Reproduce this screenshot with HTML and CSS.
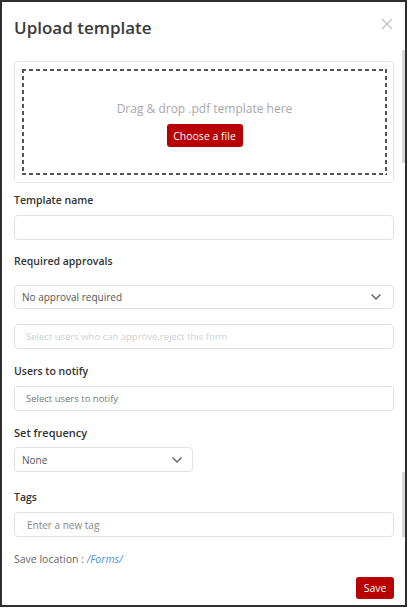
FILE: index.html
```html
<!DOCTYPE html>
<html lang="en">
<head>
  <meta charset="UTF-8" />
  <title>Upload template</title>
  <link rel="stylesheet" href="styles.css">
</head>
<body>
  <div class="upload-modal">
    <div class="modal-header">
      <h1 class="modal-title">Upload template</h1>
      <svg class="modal-close" width="12" height="12" viewBox="0 0 12 12">
        <path d="M1 1 L11 11 M11 1 L1 11" stroke="#c4c4c4" stroke-width="1.4" fill="none"/>
      </svg>
    </div>

    <div class="dropzone">
      <div class="dropzone-inner">
        <div class="dropzone-text">Drag &amp; drop .pdf template here</div>
        <button class="red-button choose-button">Choose a file</button>
      </div>
    </div>

    <label class="field-label label-first">Template name</label>
    <div class="field-input"></div>

    <label class="field-label">Required approvals</label>
    <div class="field-input field-select">
      <span class="field-value">No approval required</span>
      <svg class="chevron" width="12" height="8" viewBox="0 0 12 8">
        <path d="M1.5 1.5 L6 6 L10.5 1.5" stroke="#666" stroke-width="1.5" fill="none"/>
      </svg>
    </div>
    <div class="field-input field-gap">
      <span class="field-placeholder faint">Select users who can approve,reject this form</span>
    </div>

    <label class="field-label label-users">Users to notify</label>
    <div class="field-input">
      <span class="field-placeholder">Select users to notify</span>
    </div>

    <label class="field-label label-large">Set frequency</label>
    <div class="field-input field-select field-small">
      <span class="field-value">None</span>
      <svg class="chevron" width="12" height="8" viewBox="0 0 12 8">
        <path d="M1.5 1.5 L6 6 L10.5 1.5" stroke="#666" stroke-width="1.5" fill="none"/>
      </svg>
    </div>

    <label class="field-label label-tags">Tags</label>
    <div class="field-input">
      <span class="field-placeholder tag-placeholder">Enter a new tag</span>
    </div>

    <div class="save-location">Save location : <a href="#">/Forms/</a></div>

    <div class="modal-footer">
      <button class="red-button save-button">Save</button>
    </div>

    <div class="scroll-thumb thumb-top"></div>
    <div class="scroll-thumb thumb-bottom"></div>
  </div>
</body>
</html>
```

FILE: styles.css
```css
* {
  margin: 0;
  padding: 0;
  box-sizing: border-box;
  font-family: 'Open Sans', sans-serif;
}

body {
  background-color: white;
}

.upload-modal {
  position: relative;
  width: 407px;
  height: 607px;
  border: 2px solid #2e2e2e;
  background-color: white;
  padding: 13px 11px 0 12px;
  display: flex;
  flex-direction: column;
}

.modal-header {
  display: flex;
  justify-content: space-between;
  align-items: flex-start;
  height: 26px;
}

.modal-title {
  font-size: 17px;
  font-weight: 600;
  line-height: 26px;
  color: #3a3a3a;
}

.modal-close {
  margin-top: 3px;
  margin-right: 1px;
}

.dropzone {
  margin-top: 20px;
  height: 122px;
  border: 1px solid #e6e6e6;
  border-radius: 4px;
  padding: 7px 6px 7px 7px;
}

.dropzone-inner {
  height: 100%;
  display: flex;
  flex-direction: column;
  align-items: center;
  padding-top: 32px;
  background:
    repeating-linear-gradient(90deg, #555 0 4px, transparent 4px 7px) top / 100% 2px no-repeat,
    repeating-linear-gradient(90deg, #555 0 4px, transparent 4px 7px) bottom / 100% 2px no-repeat,
    repeating-linear-gradient(180deg, #555 0 4px, transparent 4px 7px) left / 2px 100% no-repeat,
    repeating-linear-gradient(180deg, #555 0 4px, transparent 4px 7px) right / 2px 100% no-repeat;
}

.dropzone-text {
  font-size: 12px;
  line-height: 16px;
  color: #a8a8a8;
}

.red-button {
  background-color: #b80000;
  color: white;
  border: none;
  border-radius: 3px;
  font-size: 10.5px;
  cursor: pointer;
}

.choose-button {
  margin-top: 7px;
  width: 76px;
  height: 23px;
}

.field-label {
  display: block;
  margin-top: 14px;
  font-size: 10.5px;
  font-weight: 600;
  line-height: 15px;
  color: #333;
}

.label-first {
  margin-top: 10px;
}

.label-users {
  margin-top: 15px;
}

.label-large {
  font-size: 11px;
  line-height: 16px;
  margin-top: 14px;
}

.label-tags {
  margin-top: 18px;
}

.field-input {
  margin-top: 7px;
  height: 25px;
  border: 1px solid #e2e2e2;
  border-radius: 4px;
  display: flex;
  align-items: center;
  padding: 0 11px 0 7px;
}

.field-gap {
  margin-top: 15px;
}

.field-select {
  justify-content: space-between;
  height: 24px;
  margin-top: 16px;
}

.field-small {
  width: 179px;
  height: 25px;
  margin-top: 6px;
  padding-right: 9px;
}

.field-value {
  font-size: 10px;
  color: #555;
}

.field-placeholder {
  padding-left: 4px;
  font-size: 9.5px;
  color: #777;
}

.field-placeholder.faint {
  color: #cfcfcf;
}

.tag-placeholder {
  padding-left: 5px;
  font-size: 10px;
  color: #888;
}

.save-location {
  margin-top: 14px;
  font-size: 10.5px;
  line-height: 16px;
  color: #666;
}

.save-location a {
  color: #4a8fe0;
  font-style: italic;
  text-decoration: none;
}

.modal-footer {
  display: flex;
  justify-content: flex-end;
  margin-top: 10px;
}

.save-button {
  width: 38px;
  height: 22px;
}

.scroll-thumb {
  position: absolute;
  right: 0;
  width: 3px;
  background-color: #d6d6d6;
}

.thumb-top {
  top: 48px;
  height: 113px;
}

.thumb-bottom {
  top: 470px;
  height: 65px;
}
```
